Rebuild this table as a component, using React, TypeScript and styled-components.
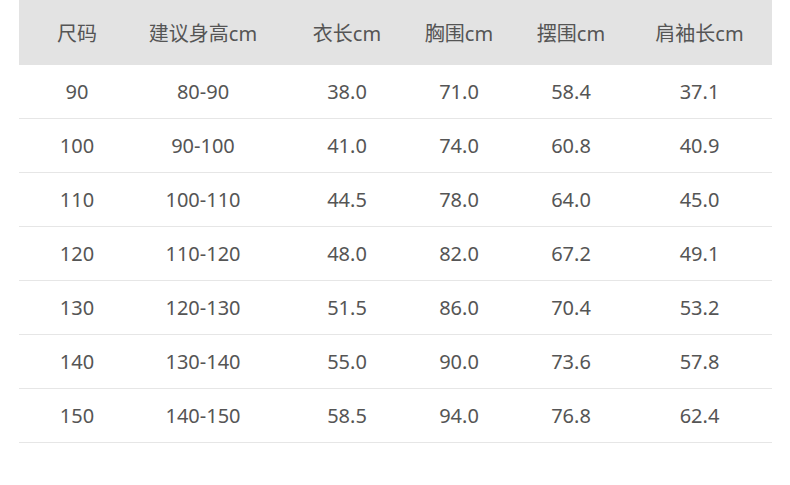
import React from 'react'
import styled, { createGlobalStyle } from 'styled-components'

const GlobalStyle = createGlobalStyle`
  body {
    margin: 0;
    background: #ffffff;
    font-family: "Noto Sans", "Open Sans", "Noto Sans CJK SC", sans-serif;
  }
`

type sizeRow = {
  size: string
  height: string
  length: string
  chest: string
  hem: string
  sleeve: string
}

const headers = ['尺码', '建议身高cm', '衣长cm', '胸围cm', '摆围cm', '肩袖长cm']

const rows: sizeRow[] = [
  { size: '90', height: '80-90', length: '38.0', chest: '71.0', hem: '58.4', sleeve: '37.1' },
  { size: '100', height: '90-100', length: '41.0', chest: '74.0', hem: '60.8', sleeve: '40.9' },
  { size: '110', height: '100-110', length: '44.5', chest: '78.0', hem: '64.0', sleeve: '45.0' },
  { size: '120', height: '110-120', length: '48.0', chest: '82.0', hem: '67.2', sleeve: '49.1' },
  { size: '130', height: '120-130', length: '51.5', chest: '86.0', hem: '70.4', sleeve: '53.2' },
  { size: '140', height: '130-140', length: '55.0', chest: '90.0', hem: '73.6', sleeve: '57.8' },
  { size: '150', height: '140-150', length: '58.5', chest: '94.0', hem: '76.8', sleeve: '62.4' },
]

const App = () => {
  return (
    <Page>
      <GlobalStyle />
      <SizeTable>
        <HeaderRow>
          {headers.map((h) => (
            <Cell key={h}>{h}</Cell>
          ))}
        </HeaderRow>
        {rows.map((r) => (
          <BodyRow key={r.size}>
            <Cell>{r.size}</Cell>
            <Cell>{r.height}</Cell>
            <Cell>{r.length}</Cell>
            <Cell>{r.chest}</Cell>
            <Cell>{r.hem}</Cell>
            <Cell>{r.sleeve}</Cell>
          </BodyRow>
        ))}
      </SizeTable>
    </Page>
  )
}

const Page = styled.div`
  width: 790px;
  height: 485px;
  padding-left: 19px;
  box-sizing: border-box;
`

const SizeTable = styled.div`
  width: 753px;
`

const RowBase = styled.div`
  display: grid;
  grid-template-columns: 116px 136px 152px 72px 152px 125px;
  align-items: center;
  color: #555555;
  font-size: 20px;

  & > div:last-child {
    padding-right: 20px;
  }
`

const HeaderRow = styled(RowBase)`
  height: 65px;
  background: #e3e3e3;
`

const BodyRow = styled(RowBase)`
  height: 53px;
  border-bottom: 1px solid #e6e6e6;
`

const Cell = styled.div`
  display: flex;
  justify-content: center;
  white-space: nowrap;
`

export default App
